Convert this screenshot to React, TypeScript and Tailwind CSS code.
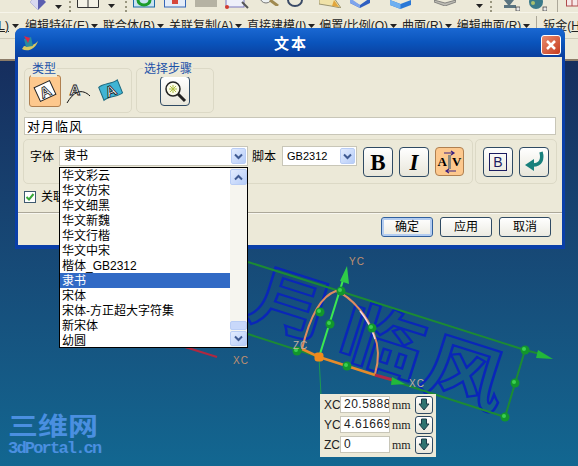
import { ReactNode } from 'react';

const FONT_ITEMS = ['华文彩云', '华文仿宋', '华文细黑', '华文新魏', '华文行楷', '华文中宋', '楷体_GB2312', '隶书', '宋体', '宋体-方正超大字符集', '新宋体', '幼圆'];

const MENU_ITEMS = [
    { label: '编辑特征(E)', className: 'ml-[6px]' },
    { label: '联合体(B)', className: 'ml-[5px]' },
    { label: '关联复制(A)', className: 'ml-[5px]' },
    { label: '直接建模(I)', className: 'ml-[5px]' },
    { label: '偏置/比例(O)', className: 'ml-[4px]' },
    { label: '曲面(R)', className: 'ml-[5px]' },
    { label: '编辑曲面(R)', className: 'ml-[5px]' },
];

const POPUP_ROWS = [
    { label: 'XC', value: '20.58884' },
    { label: 'YC', value: '4.616699' },
    { label: 'ZC', value: '0' },
];

function Caret({ className = '' }: { className?: string }) {
    return (
        <svg width="7" height="4" viewBox="0 0 7 4" className={`shrink-0 ${className}`}>
            <path d="M0 0H7L3.5 4Z" fill="#222" />
        </svg>
    );
}

function Dots({ className = '' }: { className?: string }) {
    return <span className={`w-[2px] h-[11px] border-l-2 border-dotted border-[#99967f] shrink-0 ${className}`} />;
}

function Chevron({ up = false }: { up?: boolean }) {
    return (
        <svg width="9" height="7" viewBox="0 0 9 7">
            <path d={up ? 'M1 5.5L4.5 2L8 5.5' : 'M1 1.5L4.5 5L8 1.5'} fill="none" stroke="#3f5a92" strokeWidth="2" />
        </svg>
    );
}

function ScrollArrow({ up = false, className = '' }: { up?: boolean; className?: string }) {
    return (
        <div className={`flex items-center justify-center rounded-[2px] border border-[#b9cdf5] bg-gradient-to-br from-[#e3ecfe] to-[#b7cdf8] ${className}`}>
            <Chevron up={up} />
        </div>
    );
}

function IconButton({ children, className = '' }: { children: ReactNode; className?: string }) {
    return (
        <div className={`w-[30px] h-[30px] shrink-0 flex items-center justify-center rounded-[4px] border border-[#2f4a63] bg-gradient-to-b from-white to-[#e8e6da] ${className}`}>
            {children}
        </div>
    );
}

function Group({ title, className = '', children }: { title?: string; className?: string; children: ReactNode }) {
    return (
        <div className={`relative rounded-[5px] border border-[#dcd9c6] shrink-0 ${className}`}>
            {title && (
                <span className="absolute -top-[7px] left-[6px] bg-[#ece9d8] px-[1px] text-[12px] leading-[15px] text-[#1c52a8]">{title}</span>
            )}
            {children}
        </div>
    );
}

function PushButton({ label, active = false }: { label: string; active?: boolean }) {
    return (
        <div className={`w-[52px] h-[20px] flex items-center justify-center rounded-[3px] border bg-gradient-to-b from-white to-[#ecebe2] text-[12px] leading-[20px] text-black ${active ? 'border-[#2f5f9e] shadow-[inset_0_0_0_2px_#b4cdf0]' : 'border-[#2f4a63]'}`}>
            {label}
        </div>
    );
}

function TopIcons() {
    return (
        <div className="h-[13px] flex items-start overflow-hidden bg-[#ece9d8] border-b border-[#f7f5ea]">
            <svg width="16" height="13" viewBox="0 0 16 13" className="ml-[30px] shrink-0"><path d="M0 2L8-6L16 2L8 10Z" fill="#5b5fb0" /><path d="M0 2L8 10V-6Z" fill="#d8d8f0" /></svg>
            <Caret className="ml-[9px] mt-[5px]" />
            <Dots className="ml-[7px] mt-[1px]" />
            <svg width="22" height="9" viewBox="0 0 22 9" className="ml-[6px] shrink-0"><path d="M.5 0V7.5H21.500V0M11 0V7.500" fill="#f4f2e6" stroke="#333" /></svg>
            <Caret className="ml-[9px] mt-[4px]" />
            <Dots className="ml-[10px] mt-[1px]" />
            <svg width="22" height="8" viewBox="0 0 22 8" className="ml-[6px] shrink-0"><rect x=".5" y="-5" width="21" height="12" fill="#c9e3f2" stroke="#1c6aa8" /><path d="M5 0a6 5 0 0 0 12 0" fill="none" stroke="#1c9c2c" strokeWidth="3" /></svg>
            <svg width="22" height="8" viewBox="0 0 22 8" className="ml-[9px] shrink-0"><rect x=".5" y="-5" width="21" height="12" fill="#e4ecf8" stroke="#3466b8" /><rect x="8" y="0" width="6" height="4" fill="#d6463a" /></svg>
            <div className="ml-[9px] w-[22px] h-[7px] bg-[#b5b2a3] shrink-0" />
            <svg width="24" height="9" viewBox="0 0 24 9" className="ml-[8px] shrink-0"><rect x="1" y="-4" width="18" height="11" fill="#eef0fa" stroke="#7a78c0" /><circle cx="2" cy="7" r="2" fill="#d23a2e" /><path d="M17 2L23 8" stroke="#555" strokeWidth="2" /></svg>
            <svg width="20" height="6" viewBox="0 0 20 6" className="ml-[11px] shrink-0"><circle cx="6" cy="-3" r="6" fill="#eef2f2" stroke="#777" /><path d="M10 0L18 6" stroke="#a08a50" strokeWidth="3" /></svg>
            <svg width="16" height="7" viewBox="0 0 16 7" className="ml-[7px] shrink-0"><path d="M1 0A7 6 0 0 0 15 0" fill="none" stroke="#3a4a66" strokeWidth="2" /></svg>
            <svg width="22" height="8" viewBox="0 0 22 8" className="ml-[16px] shrink-0"><path d="M0-2H15L22 8L12 6L0 4Z" fill="#f0e2a8" stroke="#9a9470" /><path d="M15 0L20 7L13 6Z" fill="#e2a63c" /></svg>
            <svg width="20" height="8" viewBox="0 0 20 8" className="ml-[9px] shrink-0"><path d="M0 0L10 5L20-2V3L10 8L0 3Z" fill="#2f5fc0" /><path d="M0-2L10 5V8L0 3Z" fill="#7ea4ec" /></svg>
            <svg width="21" height="9" viewBox="0 0 21 9" className="ml-[20px] shrink-0"><path d="M0 0L10.500 4L21 0V5L10.500 9L0 5Z" fill="#2a78d6" /><path d="M0 0L10.500 4V9L0 5Z" fill="#6fb0f0" /></svg>
            <svg width="22" height="6" viewBox="0 0 22 6" className="ml-[23px] shrink-0"><path d="M0 0L11 3L22 0V2L11 6L0 2Z" fill="#bdbcb4" stroke="#666" strokeWidth=".7" /></svg>
            <Caret className="ml-[20px] mt-[4px]" />
            <Dots className="ml-[7px] mt-[1px]" />
            <svg width="18" height="11" viewBox="0 0 18 11" className="ml-[10px] shrink-0"><path d="M2 0H12L8 5H14V8H2V5H6Z" fill="#5a7480" /><rect x="14" y="7" width="4" height="4" fill="#e8e8e8" stroke="#333" strokeWidth=".7" /></svg>
            <svg width="19" height="11" viewBox="0 0 19 11" className="ml-[8px] shrink-0"><circle cx="8" cy="2" r="7" fill="#3a7a8a" /><circle cx="5" cy="3" r="2" fill="#a8c070" /><rect x="15" y="7" width="4" height="4" fill="#e8e8e8" stroke="#333" strokeWidth=".7" /></svg>
            <div className="ml-[10px] w-px h-[13px] bg-[#aca899] shrink-0" />
            <svg width="18" height="7" viewBox="0 0 18 7" className="ml-[8px] shrink-0"><rect x=".5" y="-1" width="17" height="7" fill="#f6e8e8" stroke="#b04a4a" /><path d="M6 0V6M12 0V6" stroke="#b04a4a" /></svg>
        </div>
    );
}

function MenuRow() {
    return (
        <div className="h-[26px] flex items-start pt-[5px] bg-[#ece9d8] border-b border-[#cfccba] text-[12px] leading-[16px] text-[#222] whitespace-nowrap overflow-hidden">
            <span className="w-[9px] overflow-hidden shrink-0 flex justify-end underline">L)</span>
            <Caret className="ml-[3px] mt-[6px]" />
            {MENU_ITEMS.map((item) => (
                <div key={item.label} className={`flex items-start shrink-0 ${item.className}`}>
                    <span>{item.label}</span>
                    <Caret className="ml-[2px] mt-[6px]" />
                </div>
            ))}
            <div className="ml-[6px] w-px h-[18px] -mt-[2px] bg-[#aca899] shrink-0" />
            <span className="ml-[6px] shrink-0">钣金(<span className="underline">H</span>)</span>
        </div>
    );
}

function TypeIcons() {
    return (
        <div className="flex items-center h-full pl-[4px]">
            <div className="w-[32px] h-[32px] flex items-center justify-center rounded-[3px] border border-[#b08050] bg-[#fdc88d]">
                <svg width="26" height="26" viewBox="0 0 26 26">
                    <g transform="rotate(-25 13 13)">
                        <rect x="4.500" y="5.500" width="17" height="15" fill="#fff" stroke="#222" />
                        <text x="13" y="19" textAnchor="middle" fontSize="15" fontFamily="Liberation Sans" fontWeight="700" fill="#fff" stroke="#111" strokeWidth=".8">A</text>
                    </g>
                </svg>
            </div>
            <svg width="26" height="26" viewBox="0 0 26 26" className="ml-[4px]">
                <text x="10" y="17" textAnchor="middle" fontSize="15" fontFamily="Liberation Sans" fontWeight="700" fill="#fff" stroke="#111" strokeWidth=".8">A</text>
                <path d="M2 25C5 20 8 16 13 14C17 13 21 14 25 18" fill="none" stroke="#111" />
            </svg>
            <svg width="28" height="28" viewBox="0 0 28 28" className="ml-[6px]">
                <g transform="rotate(-22 14 14)">
                    <path d="M4 6C10 4 18 8 24 6V20C18 22 10 18 4 20Z" fill="#3fb4d4" stroke="#1c6a80" />
                    <text x="14" y="19" textAnchor="middle" fontSize="15" fontFamily="Liberation Sans" fontWeight="700" fill="#fff" stroke="#111" strokeWidth=".8">A</text>
                </g>
            </svg>
        </div>
    );
}

function GreenArrow() {
    return (
        <svg width="12" height="13" viewBox="0 0 12 13">
            <path d="M3.500 1H8.500V6H11L6 12L1 6H3.500Z" fill="#2f7470" stroke="#1c3c48" />
        </svg>
    );
}

function Viewport() {
    const balls = [[341, 292], [320, 313], [330, 325], [372, 329], [297, 352], [347, 367], [525, 351], [515, 384], [505, 418]];
    return (
        <div className="relative flex-1 bg-gradient-to-b from-[#162e5e] to-[#126791]">
            {/* cad model, coordinates are page pixels minus the 62px of bars above */}
            <svg width="578" height="404" viewBox="0 62 578 404" className="absolute inset-0">
                <path d="M185 348L217 358" stroke="#b02840" strokeWidth="2" fill="none" />
                <text x="233" y="365" fontSize="10" fontFamily="Liberation Sans" fill="#c09070" letterSpacing="1">XC</text>
                {[
                    { c: '对', x: 190, y: 300 },
                    { c: '月', x: 284, y: 329 },
                    { c: '临', x: 375, y: 366 },
                    { c: '风', x: 457, y: 398 },
                ].map((g) => (
                    <text
                        key={g.c}
                        transform={`translate(${g.x} ${g.y}) rotate(17.600) scale(1 .82)`}
                        textAnchor="middle"
                        fontSize="84"
                        fontFamily="Noto Sans CJK SC"
                        fontWeight="700"
                        fill="none"
                        stroke="#0a26b8"
                        strokeWidth="2.600"
                    >
                        {g.c}
                    </text>
                ))}
                <path d="M248 263L525 351L540 355M248 335L505 418M525 351L505 418" stroke="#1c8a34" strokeWidth="2" fill="none" />
                <path d="M538 351L553 360L536 359Z" fill="#22b83a" />
                <path d="M319 358L321 396" stroke="#1c9a50" strokeWidth="1" />
                <path d="M319 358L344 278" stroke="#3ce850" strokeWidth="2" />
                <path d="M347 267L349 285L340 282Z" fill="#2ecc48" />
                <path d="M302 350C308 325 318 298 336 292C352 298 368 318 374 335C380 350 378 365 375 375" fill="none" stroke="#e08c60" strokeWidth="2" />
                <path d="M360 312C368 322 372 330 375 340" fill="none" stroke="#f4d8e8" strokeWidth="1.500" />
                <path d="M302 350L319 358L375 376" stroke="#e58a2c" strokeWidth="2.500" fill="none" />
                <path d="M375 376L393 381" stroke="#b02848" strokeWidth="3" fill="none" />
                <path d="M392 378L405 385L391 386Z" fill="#22b83a" />
                <rect x="314.500" y="353.500" width="9" height="9" rx="3" fill="#f08a1c" />
                {balls.map(([cx, cy]) => (
                    <g key={`${cx}-${cy}`}>
                        <circle cx={cx} cy={cy} r="4.500" fill="#12962c" />
                        <circle cx={cx - 1} cy={cy - 1} r="2" fill="#3ad050" />
                    </g>
                ))}
                <text x="349" y="266" fontSize="10" fontFamily="Liberation Sans" fill="#c09070" letterSpacing="1">YC</text>
                <text x="409" y="388" fontSize="10" fontFamily="Liberation Sans" fill="#c0b0a0" letterSpacing="1">XC</text>
                <text x="293" y="350" fontSize="10" fontFamily="Liberation Sans" fill="#c0b0a0" letterSpacing="1">ZC</text>
            </svg>

            {/* site logo */}
            <div className="absolute left-[8px] top-[353px] w-[92px] flex flex-col text-[#4a8fe0]">
                <span className="h-[26px] text-[30px] leading-[26px] font-bold font-['Noto_Sans_CJK_SC',sans-serif] whitespace-nowrap scale-y-[.82] origin-top">三维网</span>
                <span className="text-[17px] leading-[18px] tracking-[-1.8px] font-bold font-['Liberation_Mono',monospace]">3dPortal.cn</span>
            </div>

            {/* coordinate popup */}
            <div className="absolute left-[320px] top-[333px] w-[116px] h-[63px] bg-[#ece9d8] flex flex-col pt-[2px] pl-[4px] gap-[3px]">
                {POPUP_ROWS.map((row) => (
                    <div key={row.label} className="flex items-center h-[17px] text-[12px] text-[#222]">
                        <span className="w-[16px]">{row.label}</span>
                        <div className="w-[50px] h-[17px] bg-white border border-[#c8c6b8] pl-[3px] leading-[15px] tracking-[0.5px] overflow-hidden whitespace-nowrap">{row.value}</div>
                        <span className="ml-[2px] w-[23px] font-['Liberation_Serif',serif] text-[12px]">mm</span>
                        <div className="w-[18px] h-[18px] flex items-center justify-center rounded-[3px] border border-[#2f4a63] bg-gradient-to-b from-white to-[#e8e6da]">
                            <GreenArrow />
                        </div>
                    </div>
                ))}
            </div>
        </div>
    );
}

function FontCombo({ value, className = '' }: { value: string; className?: string }) {
    return (
        <div className={`h-[20px] shrink-0 flex items-center justify-between bg-white border border-[#c8c6b8] pr-[1px] pl-[4px] ${className}`}>
            <span className="leading-[21px] pt-[1px]">{value}</span>
            <ScrollArrow className="w-[15px] h-[16px]" />
        </div>
    );
}

function Dialog() {
    return (
        <div className="absolute left-[15px] top-[28px] w-[550px] h-[221px] flex flex-col rounded-t-[7px] bg-[#0a3fa8] text-[12px] text-black">
            <div className="h-[29px] shrink-0 relative flex items-center justify-center rounded-t-[7px] bg-gradient-to-b from-[#1a68d2] via-[#0a54bc] to-[#0a3f9e]">
                <svg width="18" height="18" viewBox="0 0 18 18" className="absolute left-[6px] top-[7px]">
                    <path d="M1 14C6 17 14 15 17 6C14 10 8 12 3 11Z" fill="#d8c860" />
                    <path d="M3 4L10 2L12 11L5 12Z" fill="#2a8a9c" />
                    <path d="M3 1L9 3L7 8Z" fill="#d82848" />
                </svg>
                <span className="text-[15px] font-bold text-white tracking-[2px] ml-[2px] pt-[4px]">文本</span>
                <div className="absolute right-[4px] top-[7px] w-[20px] h-[20px] flex items-center justify-center rounded-[3px] border border-white bg-gradient-to-br from-[#e88a6c] to-[#c63a1c]">
                    <svg width="12" height="12" viewBox="0 0 12 12"><path d="M2 2L10 10M10 2L2 10" stroke="#fff" strokeWidth="2.500" /></svg>
                </div>
            </div>

            <div className="h-[188px] mx-[3px] flex flex-col bg-[#ece9d8]">
                <div className="flex gap-[4px] mt-[11px] ml-[6px]">
                    <Group title="类型" className="w-[108px] h-[45px]">
                        <TypeIcons />
                    </Group>
                    <Group title="选择步骤" className="w-[78px] h-[45px]">
                        <div className="flex items-center justify-center h-full">
                            <IconButton className="w-[29px]">
                                <svg width="24" height="24" viewBox="0 0 24 24">
                                    <circle cx="10" cy="10" r="7" fill="#fbfbe8" stroke="#222" strokeWidth="1.500" />
                                    <path d="M7 7L13 13M13 7L7 13M6 10H14M10 6V14" stroke="#b0c040" />
                                    <path d="M15 15L22 22" stroke="#222" strokeWidth="3" />
                                </svg>
                            </IconButton>
                        </div>
                    </Group>
                </div>

                <div className="ml-[6px] mt-[4px] w-[532px] h-[18px] shrink-0 bg-white border border-[#c8c6b8] pl-[2px] text-[13px] leading-[17px] tracking-[1px]">对月临风</div>

                <div className="flex gap-[2px] mt-[4px] ml-[5px]">
                    <Group className="w-[450px] h-[45px] flex items-start pt-[6px] pl-[6px]">
                        <span className="w-[23px] leading-[23px] whitespace-nowrap">字体</span>
                        <FontCombo value="隶书" className="ml-[6px] w-[189px]" />
                        <span className="ml-[4px] w-[23px] leading-[23px] whitespace-nowrap">脚本</span>
                        <FontCombo value="GB2312" className="ml-[7px] w-[75px] text-[11px]" />
                        <IconButton className="ml-[6px] mt-[1px]">
                            <span className="font-['Liberation_Serif',serif] font-bold text-[23px] leading-none">B</span>
                        </IconButton>
                        <IconButton className="ml-[6px] mt-[1px]">
                            <span className="font-['Liberation_Serif',serif] font-bold italic text-[23px] leading-none">I</span>
                        </IconButton>
                        <div className="relative ml-[6px] mt-[1px] w-[29px] h-[29px] shrink-0 flex items-center justify-center rounded-[4px] border border-[#b08050] bg-[#fdc88d] font-['Liberation_Serif',serif] font-bold text-[13px]">
                            <span>A</span>
                            <span className="w-[3px] h-[14px] mx-[1px] bg-[#8a8a80]" />
                            <span>V</span>
                            <svg width="16" height="29" viewBox="0 0 16 29" className="absolute left-[6px] top-0">
                                <path d="M2 5H12M9 3L12 5L9 7" fill="none" stroke="#3a2080" strokeWidth="1.200" />
                                <path d="M14 23H4M7 21L4 23L7 25" fill="none" stroke="#3a2080" strokeWidth="1.200" />
                            </svg>
                        </div>
                    </Group>
                    <Group className="w-[82px] h-[45px] flex items-start pt-[7px] pl-[7px] gap-[6px]">
                        <IconButton>
                            <span className="w-[18px] h-[18px] flex items-center justify-center border border-[#1c1c60] text-[14px] leading-none text-[#1c1c60] font-['Liberation_Sans',sans-serif]">B</span>
                        </IconButton>
                        <IconButton>
                            <svg width="22" height="24" viewBox="0 0 22 24">
                                <path d="M18 2C20 9 18 15 10 15" fill="none" stroke="#18807c" strokeWidth="3.500" />
                                <path d="M11 9V21L2 15Z" fill="#18807c" />
                            </svg>
                        </IconButton>
                    </Group>
                </div>

                <div className="flex items-center mt-[6px] ml-[6px] h-[13px]">
                    <div className="w-[12px] h-[12px] flex items-center justify-center bg-white border border-[#3f5a70]">
                        <svg width="10" height="10" viewBox="0 0 10 10"><path d="M1.500 5L4 7.500L8.500 2" fill="none" stroke="#38a838" strokeWidth="2" /></svg>
                    </div>
                    <span className="ml-[5px]">关联</span>
                </div>

                <div className="mt-[9px] h-[2px] shrink-0 border-t border-[#aca899] border-b-white bg-[#f8f7f0]" />

                <div className="flex justify-end gap-[7px] mt-[3px] pr-[11px]">
                    <PushButton label="确定" active />
                    <PushButton label="应用" />
                    <PushButton label="取消" />
                </div>
            </div>

            {/* open font list */}
            <div className="absolute left-[44px] top-[139px] w-[189px] h-[181px] flex bg-white border border-black">
                <div className="w-[170px] flex flex-col text-[12px] leading-[17px]">
                    {FONT_ITEMS.map((name) => (
                        <div key={name} className={`h-[15px] pl-[2px] whitespace-nowrap ${name === '隶书' ? 'bg-[#316ac5] text-white' : 'relative text-black'}`}>
                            {name}
                        </div>
                    ))}
                </div>
                <div className="w-[17px] flex flex-col bg-[#f6f5ef] pt-[1px] pb-[1px]">
                    <ScrollArrow up className="w-[17px] h-[16px] shrink-0" />
                    <div className="mt-auto w-[17px] h-[9px] rounded-[2px] border border-[#b9cdf5] bg-[#c8d8fa]" />
                    <ScrollArrow className="mt-[1px] w-[17px] h-[15px] shrink-0" />
                </div>
            </div>
        </div>
    );
}

export default function App() {
    return (
        <div className="relative w-[578px] h-[466px] flex flex-col overflow-hidden bg-[#ece9d8] font-['Liberation_Sans','Noto_Sans_CJK_SC',sans-serif]">
            <TopIcons />
            <MenuRow />
            <div className="h-[22px] shrink-0 bg-[#ece9d8] border-b-2 border-[#8c7c68]" />
            <Viewport />
            <Dialog />
        </div>
    );
}
